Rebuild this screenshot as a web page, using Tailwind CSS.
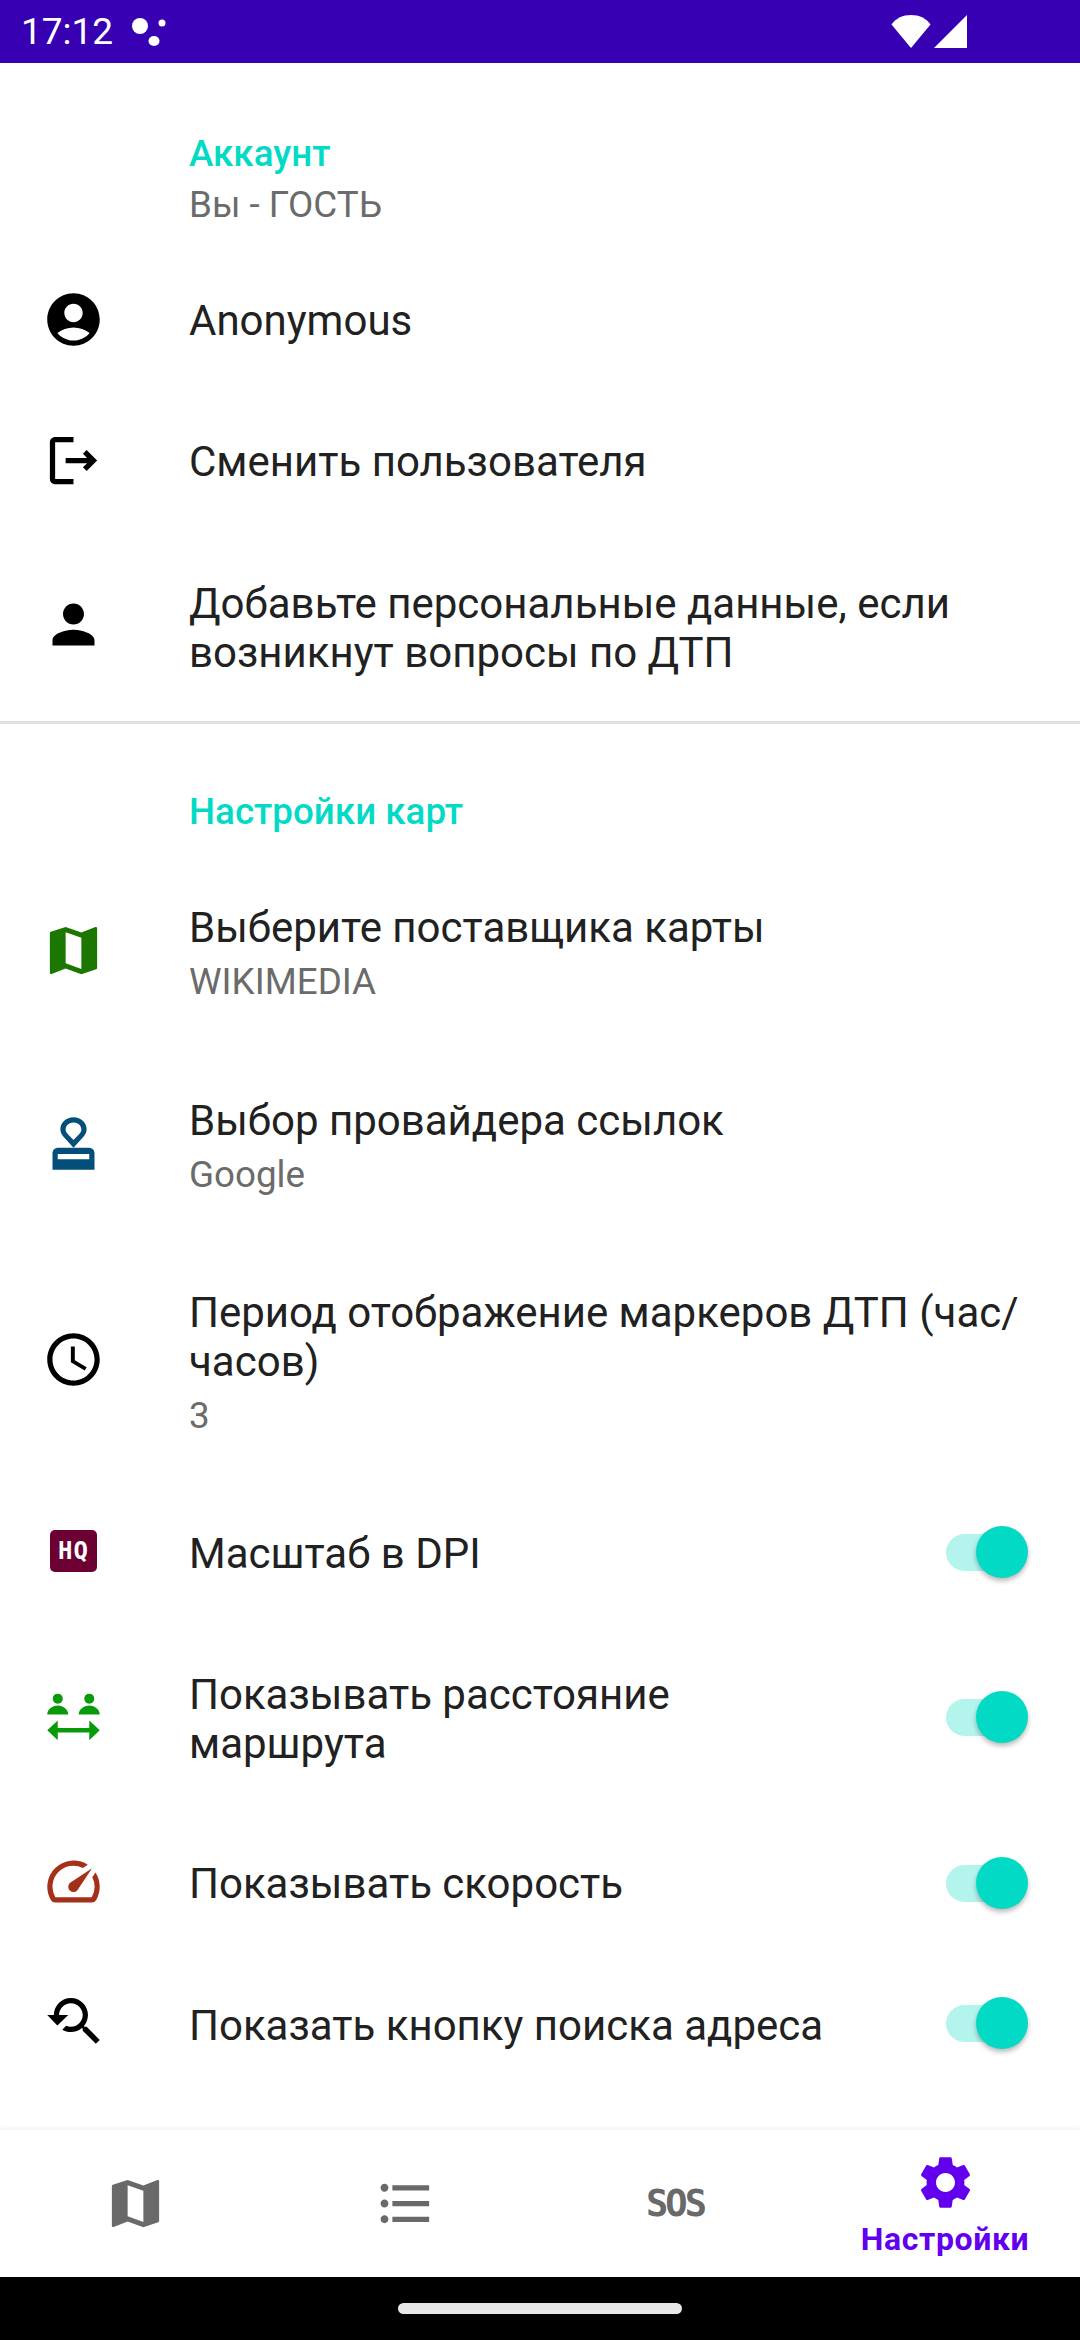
<!DOCTYPE html>
<html lang="en">
<head>
    <meta charset="UTF-8">
    <title>Настройки</title>
    <script src="https://cdn.jsdelivr.net/npm/@tailwindcss/browser@4"></script>
</head>
<body class="bg-white font-['Roboto',sans-serif] text-[42px] leading-[49px] text-[#212121]">
<div class="w-[1080px] h-[2340px] flex flex-col overflow-hidden">

    <!-- Status bar -->
    <header class="h-[63px] shrink-0 bg-[#3700b3] flex items-center pl-[21px] pr-[113px] text-white text-[37px]">
        <span>17:12</span>
        <svg class="ml-[19px] w-[34px] h-[28px]" viewBox="0 0 34 28" fill="#fff"><ellipse cx="8" cy="8" rx="8" ry="8"/><ellipse cx="22" cy="23" rx="5.500" ry="5"/><circle cx="30" cy="5" r="3.500"/></svg>
        <div class="ml-auto flex items-center gap-[3px]">
            <svg class="w-[40px] h-[33px]" viewBox="0 0 40 33" fill="#fff"><path d="M20 33 .5 9.500C5 3 12 0 20 0s15 3 19.500 9.500z"/></svg>
            <svg class="w-[33px] h-[33px]" viewBox="0 0 33 33" fill="#fff"><path d="M33 0v33H0z"/></svg>
        </div>
    </header>

    <main class="flex-1 min-h-0 flex flex-col">

        <!-- Account -->
        <section class="h-[187px] pl-[189px] pt-[68px]">
            <h2 class="text-[36.750px] leading-[46px] font-medium text-[#03dac5]">Аккаунт</h2>
            <p class="text-[36.750px] leading-[46px] mt-[5px] text-[#6b6b6b]">Вы - ГОСТЬ</p>
        </section>

        <div class="h-[141px] flex items-center">
            <div class="w-[189px] pl-[42px]"><svg class="w-[63px] h-[63px] -mt-[3px]" viewBox="0 0 24 24" fill="#000"><path d="M12 2C6.480 2 2 6.480 2 12s4.480 10 10 10 10-4.480 10-10S17.520 2 12 2zM12 6c1.930 0 3.500 1.570 3.500 3.500S13.930 13 12 13s-3.500-1.570-3.500-3.500S10.070 6 12 6zm0 14c-2.030 0-4.430-.820-6.140-2.880C7.550 15.800 9.680 15 12 15s4.450.800 6.140 2.120C16.430 19.180 14.030 20 12 20z"/></svg></div>
            <p>Anonymous</p>
        </div>
        <div class="h-[141px] flex items-center">
            <div class="w-[189px] pl-[42px]"><svg class="w-[63px] h-[63px] -mt-[3px]" viewBox="0 0 24 24" fill="#000"><path d="M17 8l-1.410 1.410L17.170 11H9v2h8.170l-1.580 1.580L17 16l4-4zM5 5h7V3H5c-1.100 0-2 .900-2 2v14c0 1.100.900 2 2 2h7v-2H5V5z"/></svg></div>
            <p>Сменить пользователя</p>
        </div>
        <div class="h-[189px] flex items-center">
            <div class="w-[189px] pl-[42px]"><svg class="w-[63px] h-[63px] -mt-[4px]" viewBox="0 0 24 24" fill="#000"><path d="M12 12c2.210 0 4-1.790 4-4s-1.790-4-4-4-4 1.790-4 4 1.790 4 4 4zm0 2c-2.670 0-8 1.340-8 4v2h16v-2c0-2.660-5.330-4-8-4z"/></svg></div>
            <p class="w-[849px] pt-[2px]">Добавьте персональные данные, если возникнут вопросы по ДТП</p>
        </div>
        <div class="h-[3px] bg-[#e0e0e0]"></div>

        <!-- Maps -->
        <section class="h-[130px] pl-[189px] pt-[65px]">
            <h2 class="text-[36.750px] leading-[46px] font-medium text-[#03dac5]">Настройки карт</h2>
        </section>

        <div class="h-[193px] flex items-center">
            <div class="w-[189px] pl-[42px]"><svg class="w-[63px] h-[63px]" viewBox="0 0 24 24" fill="#1b7700"><path d="M20.500 3l-.160.030L15 5.100 9 3 3.360 4.900c-.210.070-.360.250-.360.480V20.500c0 .280.220.500.500.500l.160-.030L9 18.900l6 2.100 5.640-1.900c.210-.070.360-.250.360-.480V3.500c0-.280-.220-.500-.500-.500zM15 19l-6-2.110V5l6 2.110V19z"/></svg></div>
            <div class="pt-[5px]">
                <p>Выберите поставщика карты</p>
                <p class="text-[36.750px] leading-[43px] mt-[8px] text-[#6b6b6b]">WIKIMEDIA</p>
            </div>
        </div>
        <div class="h-[192px] flex items-center">
            <div class="w-[189px] pl-[42px]"><svg class="w-[63px] h-[63px]" viewBox="0 0 24 24" fill="#044f7a" fill-rule="evenodd"><path d="M12 2c-2.760 0-5 1.900-5 4.600 0 1.200.500 2 1.200 2.800L12 13.600l3.800-4.200c.700-.800 1.200-1.600 1.200-2.800C17 3.900 14.760 2 12 2zM12 4c1.700 0 3 1.200 3 2.700 0 .600-.300 1.100-.700 1.600L12 10.700 9.700 8.300c-.400-.500-.700-1-.700-1.600C9 5.200 10.300 4 12 4z"/><path d="M4 22v-6.400a2 2 0 0 1 2-2h12a2 2 0 0 1 2 2V22zM6 16v2h12v-2z"/></svg></div>
            <div class="pt-[5px]">
                <p>Выбор провайдера ссылок</p>
                <p class="text-[36.750px] leading-[43px] mt-[8px] text-[#6b6b6b]">Google</p>
            </div>
        </div>
        <div class="h-[241px] flex items-center">
            <div class="w-[189px] pl-[42px]"><svg class="w-[63px] h-[63px]" viewBox="0 0 24 24" fill="#000"><path d="M11.990 2C6.470 2 2 6.480 2 12s4.470 10 9.990 10C17.520 22 22 17.520 22 12S17.520 2 11.990 2zM12 20c-4.420 0-8-3.580-8-8s3.580-8 8-8 8 3.580 8 8-3.580 8-8 8zm.500-13H11v6l5.250 3.150.750-1.230-4.500-2.670z"/></svg></div>
            <div class="w-[849px] pt-[5px]">
                <p>Период отображение маркеров ДТП (час/ часов)</p>
                <p class="text-[36.750px] leading-[43px] mt-[8px] text-[#6b6b6b]">3</p>
            </div>
        </div>

        <div class="h-[141px] flex items-center">
            <div class="w-[189px] pl-[42px]">
                <div class="w-[47px] h-[42px] ml-[8px] rounded-[5px] bg-[#6c0033] flex items-center justify-center text-white font-['DejaVu_Sans_Mono',monospace] font-bold text-[24px] leading-none tracking-[1px]">HQ</div>
            </div>
            <p class="pt-[5px]">Масштаб в DPI</p>
            <div class="relative ml-auto mr-[58px] w-[76px] h-[37px] rounded-full bg-[#b3f4ed] mt-[4px]">
                <div class="absolute -right-[6px] -top-[8px] w-[52px] h-[52px] rounded-full bg-[#03dac5] shadow-[0_3px_5px_rgba(0,0,0,0.28)]"></div>
            </div>
        </div>
        <div class="h-[190px] flex items-center">
            <div class="w-[189px] pl-[42px]"><svg class="w-[63px] h-[63px]" viewBox="0 0 24 24" fill="#089a08"><circle cx="6" cy="5.200" r="1.900"/><circle cx="18" cy="5.200" r="1.900"/><path d="M2 11.200C2 9 4.500 7.800 6 7.800s4 1.200 4 3.400zM14 11.200c0-2.200 2.500-3.400 4-3.400s4 1.200 4 3.400zM6 13.500v2.900h12v-2.900l4 3.750-4 3.750v-2.900H6V21l-4-3.750z"/></svg></div>
            <p class="w-[560px] pt-[5px]">Показывать расстояние маршрута</p>
            <div class="relative ml-auto mr-[58px] w-[76px] h-[37px] rounded-full bg-[#b3f4ed] mt-[3px]">
                <div class="absolute -right-[6px] -top-[8px] w-[52px] h-[52px] rounded-full bg-[#03dac5] shadow-[0_3px_5px_rgba(0,0,0,0.28)]"></div>
            </div>
        </div>
        <div class="h-[141px] flex items-center">
            <div class="w-[189px] pl-[42px]"><svg class="w-[63px] h-[63px]" viewBox="0 0 24 24" fill="#a5301a"><path d="M20.380 8.570l-1.230 1.850a8 8 0 0 1-.220 7.580H5.070A8 8 0 0 1 15.580 6.850l1.850-1.230A10 10 0 0 0 3.350 19a2 2 0 0 0 1.720 1h13.850a2 2 0 0 0 1.740-1 10 10 0 0 0-.280-10.430zm-9.790 6.840a2 2 0 0 0 2.830 0l5.660-8.490-8.490 5.660a2 2 0 0 0 0 2.830z"/></svg></div>
            <p class="pt-[4px]">Показывать скорость</p>
            <div class="relative ml-auto mr-[58px] w-[76px] h-[37px] rounded-full bg-[#b3f4ed] mt-[3px]">
                <div class="absolute -right-[6px] -top-[8px] w-[52px] h-[52px] rounded-full bg-[#03dac5] shadow-[0_3px_5px_rgba(0,0,0,0.28)]"></div>
            </div>
        </div>
        <div class="h-[141px] flex items-center">
            <div class="w-[189px] pl-[42px]"><svg class="w-[63px] h-[63px] -mt-[2px]" viewBox="0 0 24 24" fill="#000"><path d="M17.010 14h-.800l-.270-.270c.980-1.140 1.570-2.610 1.570-4.230 0-3.590-2.910-6.500-6.500-6.500s-6.500 3-6.500 6.500H2l3.840 4 4.160-4H6.510C6.510 7 8.530 5 11.010 5s4.500 2.010 4.500 4.500c0 2.480-2.020 4.500-4.500 4.500-.650 0-1.260-.140-1.820-.380L7.710 15.100c.970.570 2.090.900 3.300.900 1.610 0 3.080-.590 4.220-1.570l.270.270v.790l5.010 4.990L22 19l-4.990-5z"/></svg></div>
            <p class="pt-[5px]">Показать кнопку поиска адреса</p>
            <div class="relative ml-auto mr-[58px] w-[76px] h-[37px] rounded-full bg-[#b3f4ed] mt-[2px]">
                <div class="absolute -right-[6px] -top-[8px] w-[52px] h-[52px] rounded-full bg-[#03dac5] shadow-[0_3px_5px_rgba(0,0,0,0.28)]"></div>
            </div>
        </div>
    </main>

    <!-- Bottom nav -->
    <nav class="h-[147px] shrink-0 grid grid-cols-4 bg-white shadow-[0_-2px_4px_rgba(0,0,0,0.06)]">
        <div class="flex items-center justify-center"><svg class="w-[63px] h-[63px]" viewBox="0 0 24 24" fill="#696969"><path d="M20.500 3l-.160.030L15 5.100 9 3 3.360 4.900c-.210.070-.360.250-.360.480V20.500c0 .280.220.500.500.500l.160-.030L9 18.900l6 2.100 5.640-1.900c.210-.070.360-.250.360-.480V3.500c0-.280-.220-.500-.500-.500zM15 19l-6-2.110V5l6 2.110V19z"/></svg></div>
        <div class="flex items-center justify-center"><svg class="w-[63px] h-[63px]" viewBox="0 0 24 24" fill="#696969"><path d="M4 10.500c-.830 0-1.500.670-1.500 1.500s.670 1.500 1.500 1.500 1.500-.670 1.500-1.500-.670-1.500-1.500-1.500zm0-6c-.830 0-1.500.670-1.500 1.500S3.170 7.500 4 7.500 5.500 6.830 5.500 6 4.830 4.500 4 4.500zm0 12c-.830 0-1.500.680-1.500 1.500s.680 1.500 1.500 1.500 1.500-.680 1.500-1.500-.670-1.500-1.500-1.500zM7 19h14v-2H7v2zm0-6h14v-2H7v2zm0-8v2h14V5H7z"/></svg></div>
        <div class="flex items-center justify-center text-[#696969] font-['DejaVu_Sans_Mono',monospace] font-bold text-[37px] leading-none tracking-[-3px]">SOS</div>
        <div class="flex flex-col items-center pt-[21px]">
            <svg class="w-[63px] h-[63px]" viewBox="0 0 24 24" fill="#6200ee"><path d="M19.140 12.940c.040-.300.060-.610.060-.940 0-.320-.020-.640-.070-.940l2.030-1.580c.180-.140.230-.410.120-.610l-1.920-3.320c-.120-.220-.370-.290-.590-.220l-2.390.960c-.500-.380-1.030-.700-1.620-.940l-.360-2.540c-.040-.240-.240-.410-.480-.410h-3.840c-.240 0-.430.170-.470.410l-.360 2.540c-.590.240-1.130.570-1.620.940l-2.390-.960c-.220-.080-.470 0-.590.220L2.740 8.870c-.120.210-.080.470.120.610l2.030 1.580c-.050.300-.090.630-.090.940s.020.640.07.940l-2.030 1.580c-.180.140-.230.410-.12.610l1.920 3.320c.120.220.370.290.590.220l2.390-.960c.500.380 1.030.700 1.620.940l.360 2.540c.050.240.240.410.480.410h3.840c.240 0 .440-.170.470-.410l.360-2.540c.590-.240 1.130-.560 1.620-.940l2.390.960c.220.080.470 0 .59-.22l1.920-3.320c.120-.220.070-.470-.12-.610l-2.010-1.580zM12 15.600c-1.980 0-3.600-1.620-3.600-3.600s1.620-3.600 3.600-3.600 3.600 1.620 3.600 3.600-1.620 3.600-3.600 3.600z"/></svg>
            <span class="mt-[6px] text-[32px] leading-[38px] font-bold tracking-[0.6px] text-[#6200ee]">Настройки</span>
        </div>
    </nav>

    <!-- Gesture bar -->
    <footer class="h-[63px] shrink-0 bg-black flex justify-center pt-[26px]">
        <div class="w-[284px] h-[11px] rounded-full bg-[#e8e8e8]"></div>
    </footer>
</div>
</body>
</html>
